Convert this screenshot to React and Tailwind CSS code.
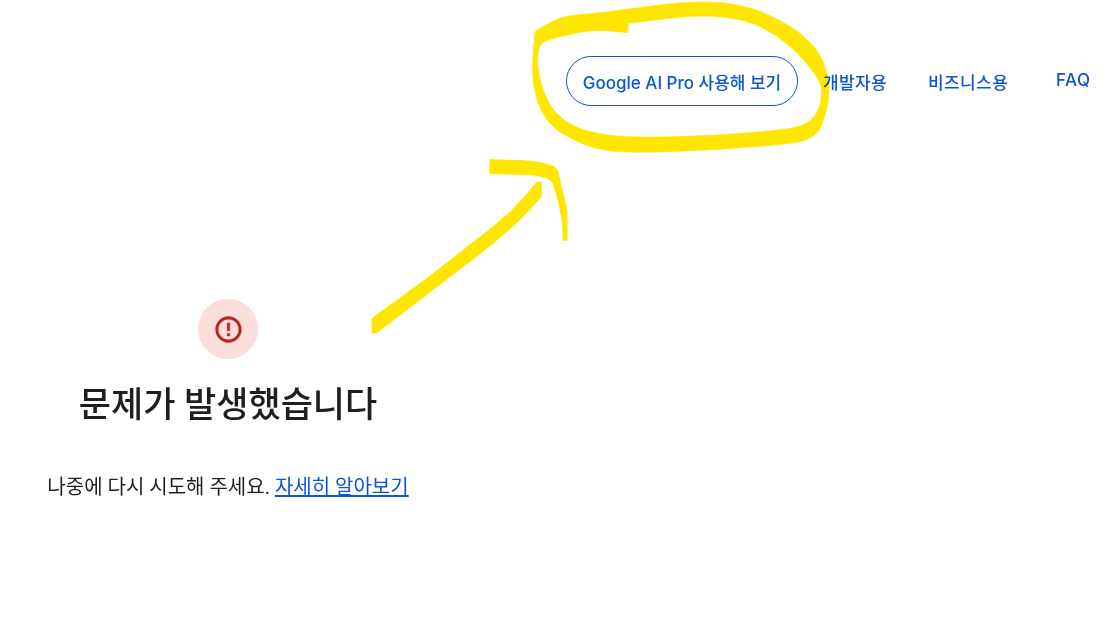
import React from 'react';

// 노란색 손글씨 표시 (확대 이미지 기준 좌표)
const smooth = (pts) => {
  let d = `M${pts[0][0]} ${pts[0][1]}`;
  for (let i = 1; i < pts.length - 1; i++) {
    const mx = (pts[i][0] + pts[i + 1][0]) / 2;
    const my = (pts[i][1] + pts[i + 1][1]) / 2;
    d += `Q${pts[i][0]} ${pts[i][1]} ${mx} ${my}`;
  }
  const last = pts[pts.length - 1];
  return d + `L${last[0]} ${last[1]}`;
};

const RING_OUTER = [[45, 95], [90, 65], [150, 45], [210, 42], [320, 28], [440, 12], [530, 5], [620, 8], [700, 25], [780, 60], [850, 105], [900, 160], [925, 225], [928, 290], [915, 350], [895, 400], [850, 425], [770, 435], [600, 448], [450, 455], [330, 458], [240, 450], [170, 425], [100, 385], [60, 330], [40, 260], [37, 190], [45, 95]];
const RING_INNER = [[325, 70], [440, 55], [530, 47], [620, 50], [700, 68], [770, 106], [835, 160], [880, 215], [906, 255], [903, 310], [886, 350], [850, 378], [780, 390], [650, 402], [500, 410], [350, 412], [250, 405], [170, 385], [110, 345], [75, 290], [55, 220], [52, 170], [58, 135], [80, 120], [140, 105], [220, 88], [323, 98]];

const ARROW_SHAFT = 'M35 505L200 385L340 275Q400 230 450 185Q495 140 530 95L545 95L545 140Q510 180 470 220Q410 275 350 320L200 435L50 550L35 550Z';
const ARROW_HEAD = 'M388 28L480 30Q540 32 580 48Q592 55 595 65L610 130Q620 170 622 185L623 272L608 272Q608 240 605 210Q598 170 590 140L578 100Q570 90 560 85Q530 75 500 75L388 72Z';

function Scribble() {
  return (
    <svg className="absolute left-0 top-0 mix-blend-multiply pointer-events-none" width="1103" height="619" viewBox="0 0 1103 619">
      <g transform="translate(520 0) scale(0.33333)">
        <path fillRule="evenodd" fill="#ffe600" stroke="#ffe600" strokeWidth="2" d={`${smooth(RING_OUTER)}Z ${smooth(RING_INNER)}L325 70Z`} />
      </g>
      <g transform="translate(360 150) scale(0.33333)" fill="#ffe600">
        <path d={ARROW_SHAFT} />
        <path d={ARROW_HEAD} />
      </g>
    </svg>
  );
}

export default function App() {
  return (
    <div className="relative h-[619px] w-[1103px] overflow-hidden bg-white font-['Roboto','Noto_Sans_CJK_KR',sans-serif]">
      {/* 상단 메뉴 */}
      <header className="flex items-center justify-end pt-[56px] pr-[13px] font-['Inter','Noto_Sans_CJK_KR',sans-serif] text-[17px] font-medium text-[#0b57d0]">
        <a className="flex h-[50px] w-[232px] items-center justify-center rounded-full border border-[#0b57d0] pt-[5px] whitespace-nowrap">
          Google AI Pro 사용해 보기
        </a>
        <a className="ml-[25px] w-[64px] pt-[5px] text-center whitespace-nowrap tracking-[0.4px]">개발자용</a>
        <a className="ml-[41px] w-[80px] pt-[5px] text-center whitespace-nowrap tracking-[0.4px]">비즈니스용</a>
        <a className="ml-[48px] w-[34px] text-center tracking-[0.5px]">FAQ</a>
      </header>

      {/* 오류 메시지 */}
      <main className="mt-[193px] ml-[47px] flex w-[362px] flex-col items-center">
        <div className="flex h-[60px] w-[60px] items-center justify-center rounded-full bg-[#f9dedc]">
          <svg width="31" height="31" viewBox="0 0 24 24" fill="#b3261e" stroke="#b3261e" strokeWidth="0.35">
            <path d="M11 15h2v2h-2zm0-8h2v6h-2zm.99-5C6.47 2 2 6.48 2 12s4.47 10 9.99 10C17.52 22 22 17.52 22 12S17.52 2 11.99 2zM12 20c-4.42 0-8-3.58-8-8s3.58-8 8-8 8 3.58 8 8-3.58 8-8 8z" />
          </svg>
        </div>
        <h1 className="mt-[24px] text-[35px] leading-[46px] font-medium whitespace-nowrap text-[#1f1f1f]">문제가 발생했습니다</h1>
        <p className="mt-[44px] text-[20px] leading-[28px] whitespace-nowrap text-[#1f1f1f]">
          나중에 다시 시도해 주세요. <a className="text-[#0b57d0] underline">자세히 알아보기</a>
        </p>
      </main>

      <Scribble />
    </div>
  );
}
